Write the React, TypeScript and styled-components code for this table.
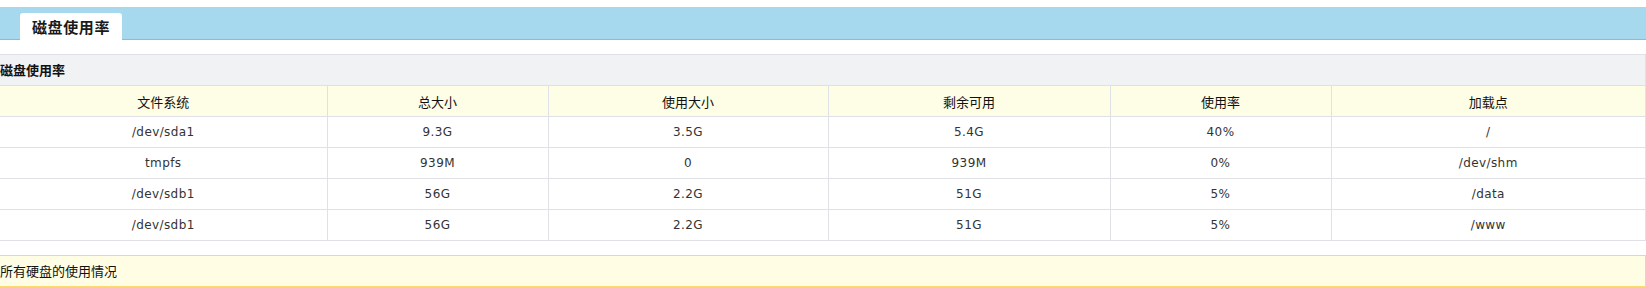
import React from 'react'
import styled, { createGlobalStyle } from 'styled-components'

const GlobalStyle = createGlobalStyle`
  html, body {
    margin: 0;
    padding: 0;
    background: #fff;
  }
  body {
    font-family: "DejaVu Sans", Verdana, "Noto Sans CJK SC", sans-serif;
    font-size: 12px;
    color: #333;
    overflow: hidden;
  }
`

const Page = styled.div`
  padding-top: 7px;
  width: 1646px;
`

const TabBar = styled.div`
  height: 32px;
  background: #a6d9ee;
  border-bottom: 1px solid #7fc0de;
  padding-left: 20px;
  display: flex;
  align-items: flex-end;
`

const Tab = styled.div`
  height: 27px;
  margin-bottom: -1px;
  padding: 0 12px 0 12px;
  background: #fff;
  border-radius: 3px 3px 0 0;
  display: flex;
  align-items: center;
  font-family: "Noto Sans CJK SC", sans-serif;
  font-size: 15px;
  letter-spacing: 0.6px;
  font-weight: bold;
  color: #1a1a1a;
`

const Panel = styled.div`
  margin: 14px 0 0 -1px;
  width: 1645px;
  border: 1px solid #dfe1e6;
  border-bottom: none;
`

const PanelTitle = styled.div`
  height: 30px;
  line-height: 30px;
  background: #f1f2f4;
  border-bottom: 1px solid #dfe1e6;
  font-family: "Noto Sans CJK SC", sans-serif;
  font-weight: bold;
  font-size: 13px;
  color: #111;
`

const Table = styled.table`
  width: 100%;
  border-collapse: collapse;
  table-layout: fixed;
`

const HeadCell = styled.th`
  height: 30px;
  padding: 0;
  background: #fefde6;
  border-bottom: 1px solid #dfe1e6;
  border-left: 1px solid #dfe1e6;
  font-family: "Noto Sans CJK SC", sans-serif;
  font-weight: normal;
  font-size: 13px;
  color: #111;
  text-align: center;
  &:first-child {
    border-left: none;
  }
`

const Cell = styled.td`
  height: 30px;
  padding: 0;
  border-bottom: 1px solid #dfe1e6;
  border-left: 1px solid #dfe1e6;
  text-align: center;
  letter-spacing: 0.4px;
  color: #333;
  &:first-child {
    border-left: none;
  }
`

const Notice = styled.div`
  margin: 14px 0 0 -1px;
  width: 1645px;
  height: 30px;
  line-height: 30px;
  background: #fffee4;
  border: 1px solid #fcd96e;
  font-family: "Noto Sans CJK SC", sans-serif;
  font-size: 13px;
  color: #111;
`

const columns = [
  { title: '文件系统', width: 327 },
  { title: '总大小', width: 221 },
  { title: '使用大小', width: 280 },
  { title: '剩余可用', width: 282 },
  { title: '使用率', width: 221 },
  { title: '加载点', width: 314 },
]

const rows = [
  ['/dev/sda1', '9.3G', '3.5G', '5.4G', '40%', '/'],
  ['tmpfs', '939M', '0', '939M', '0%', '/dev/shm'],
  ['/dev/sdb1', '56G', '2.2G', '51G', '5%', '/data'],
  ['/dev/sdb1', '56G', '2.2G', '51G', '5%', '/www'],
]

export default function App() {
  return (
    <Page>
      <GlobalStyle />
      <TabBar>
        <Tab>磁盘使用率</Tab>
      </TabBar>
      <Panel>
        <PanelTitle>磁盘使用率</PanelTitle>
        <Table>
          <colgroup>
            {columns.map((c) => (
              <col key={c.title} style={{ width: c.width }} />
            ))}
          </colgroup>
          <thead>
            <tr>
              {columns.map((c) => (
                <HeadCell key={c.title}>{c.title}</HeadCell>
              ))}
            </tr>
          </thead>
          <tbody>
            {rows.map((r, i) => (
              <tr key={i}>
                {r.map((v, j) => (
                  <Cell key={j}>{v}</Cell>
                ))}
              </tr>
            ))}
          </tbody>
        </Table>
      </Panel>
      <Notice>所有硬盘的使用情况</Notice>
    </Page>
  )
}
